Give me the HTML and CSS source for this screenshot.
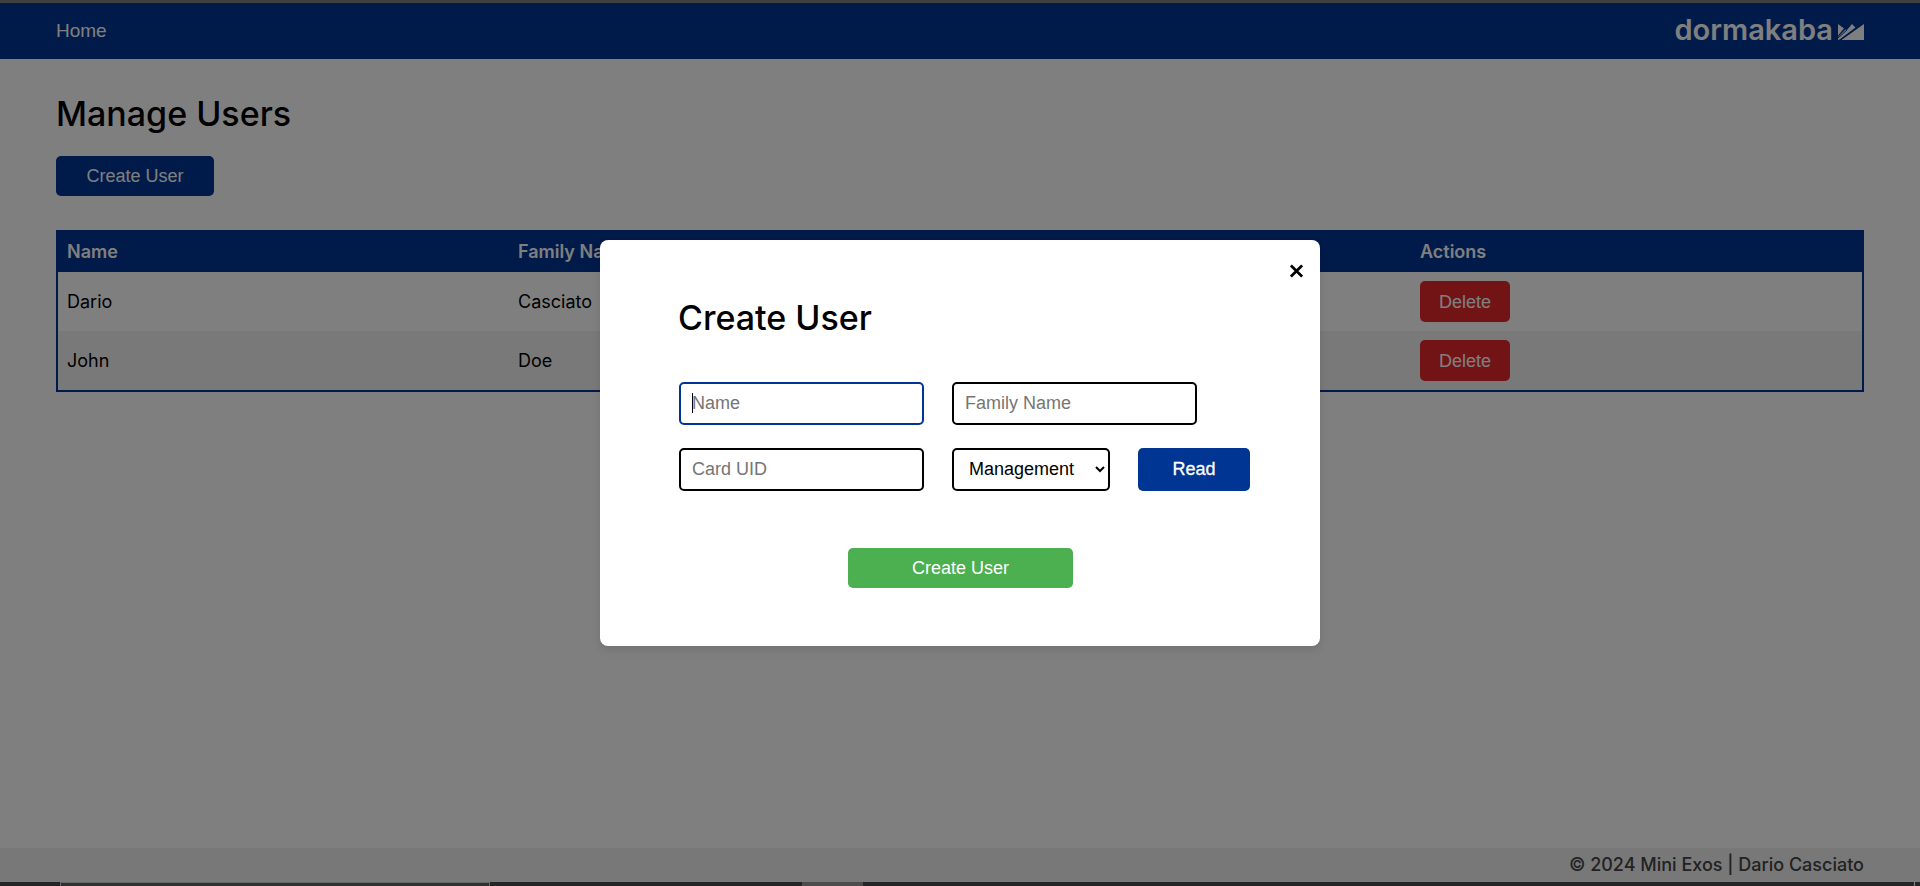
FILE: index.html
```html
<!DOCTYPE html>
<html lang="en">
<head>
<meta charset="utf-8">
<meta name="viewport" content="width=device-width, initial-scale=1">
<title>Manage Users</title>
<link rel="stylesheet" href="styles.css">
</head>
<body>
<div class="edge-top"></div>
<div class="app">
  <header class="topbar">
    <a class="nav-link" href="#">Home</a>
    <div class="logo">
      <span>dormakaba</span>
      <svg class="logo-mark" viewBox="0 0 26 16" aria-hidden="true">
        <path d="M0 0 6 4.500 0 11.500Z M0 13 7.500 5.500 9 6 14 0 17.500 3.500 1.500 15.500 0 16Z M3.500 16 26 0V16Z"/>
        <path class="logo-cut" d="M0 14 9 6"/>
      </svg>
    </div>
  </header>

  <main class="content">
    <h1 class="title">Manage Users</h1>
    <button class="btn btn-primary" type="button">Create User</button>
    <table class="users">
      <thead>
        <tr><th>Name</th><th>Family Name</th><th></th><th>Actions</th></tr>
      </thead>
      <tbody>
        <tr><td>Dario</td><td>Casciato</td><td></td><td><button class="btn btn-delete" type="button">Delete</button></td></tr>
        <tr><td>John</td><td>Doe</td><td></td><td><button class="btn btn-delete" type="button">Delete</button></td></tr>
      </tbody>
    </table>
  </main>

  <footer class="footer">© 2024 Mini Exos | Dario Casciato</footer>

  <div class="overlay">
    <form class="modal" role="dialog" aria-labelledby="modal-title">
      <button class="close" type="button" aria-label="Close">
        <svg viewBox="0 0 14 14" aria-hidden="true"><path d="M1 1 13 13M13 1 1 13"/></svg>
      </button>
      <h2 class="title" id="modal-title">Create User</h2>
      <div class="fields">
        <div class="row">
          <input class="field field-active" type="text" placeholder="Name" aria-label="Name">
          <input class="field" type="text" placeholder="Family Name" aria-label="Family Name">
        </div>
        <div class="row">
          <input class="field" type="text" placeholder="Card UID" aria-label="Card UID">
          <select class="select" aria-label="Role"><option>Management</option></select>
          <button class="btn btn-read" type="button">Read</button>
        </div>
      </div>
      <button class="btn btn-submit" type="submit">Create User</button>
    </form>
  </div>
</div>
<div class="edge-bottom"><span class="task-search"></span><span class="task-active"></span><span class="task-end"></span></div>
</body>
</html>
```

FILE: styles.css
```css
* { box-sizing: border-box; }

body {
  margin: 0;
  min-height: 100vh;
  display: flex;
  flex-direction: column;
  background: #fff;
  color: #000;
  font: 18px/22px Inter, "Open Sans", sans-serif;
}

.edge-top { height: 3px; background: #3f3f3f; }

.app {
  position: relative;
  flex: 1;
  display: flex;
  flex-direction: column;
}

.topbar {
  height: 56px;
  padding: 0 56px;
  display: flex;
  align-items: center;
  justify-content: space-between;
  background: #003594;
  color: #fff;
}

.nav-link {
  color: inherit;
  text-decoration: none;
  font-family: "Liberation Sans", Arial, sans-serif;
  font-size: 19px;
}

.logo {
  display: flex;
  align-items: baseline;
  gap: 5px;
  padding-bottom: 2px;
  font-size: 29px;
  font-weight: 600;
  line-height: 32px;
}

.logo-mark { width: 26px; height: 16px; fill: #fff; }
.logo-cut { stroke: #003594; stroke-width: 1; }

.content { flex: 1; padding: 33px 56px; }

.title {
  margin: 0;
  font-size: 34px;
  font-weight: 500;
  line-height: 44px;
}

.btn {
  height: 40px;
  padding: 0 16px;
  border: 0;
  border-radius: 5px;
  color: #fff;
  font: 18px/22px "Liberation Sans", Arial, sans-serif;
}

.btn-primary { width: 158px; margin-top: 20px; background: #003594; display: block; }
.btn-delete { display: block; height: 41px; width: 90px; background: #e5282c; }

.users {
  width: 100%;
  margin-top: 34px;
  table-layout: fixed;
  border: 2px solid #003594;
  border-spacing: 0;
  text-align: left;
}

.users th { padding: 9px; background: #003594; color: #fff; font-weight: 600; }
.users td { padding: 9px; }
.users tbody tr:nth-child(even) { background: #f2f2f2; }

.footer {
  padding: 6px 56px;
  background: #f0f0f0;
  color: #444;
  text-align: right;
  font-weight: 500;
}

.overlay {
  position: absolute;
  inset: 0;
  display: flex;
  align-items: center;
  justify-content: center;
  background: rgba(0, 0, 0, 0.5);
}

.modal {
  position: relative;
  width: 720px;
  max-width: 100%;
  padding: 56px 70px 58px 78px;
  background: #fff;
  border-radius: 8px;
  box-shadow: 0 4px 8px rgba(0, 0, 0, 0.1);
}

.close {
  position: absolute;
  top: 21px;
  right: 14px;
  padding: 3px;
  border: 0;
  background: none;
  line-height: 0;
}

.close svg { width: 13px; height: 14px; fill: none; stroke: #000; stroke-width: 3; }

.fields {
  display: flex;
  flex-direction: column;
  gap: 23px;
  margin: 42px 0 0 1px;
}

.row { display: flex; align-items: center; gap: 28px; }

.field, .select {
  height: 43px;
  border: 2px solid #000;
  border-radius: 5px;
  background: #fff;
  color: #000;
  font: 18px/22px "Liberation Sans", Arial, sans-serif;
  outline: none;
}

.field { width: 245px; padding: 0 11px; }

/* Focused look: blue border and a text caret at the start of the field */
.field-active {
  border-color: #003594;
  background: linear-gradient(#000, #000) 11px center / 1px 20px no-repeat #fff;
}

.field::placeholder { color: #757575; }
.select { width: 158px; padding: 0 0 0 11px; }

.btn-read { width: 112px; height: 43px; background: #003594; -webkit-text-stroke: 0.3px #fff; }

.btn-submit {
  display: block;
  width: 225px;
  margin: 57px auto 0 170px;
  background: #4caf50;
}

.edge-bottom {
  height: 4px;
  display: flex;
  background: #242526;
}

.task-search { width: 430px; margin-left: 60px; border: 1px solid #666; border-bottom: 0; background: #303232; }
.task-active { width: 61px; margin-left: 312px; background: #4d4d4d; }
.task-end { width: 1px; margin: 0 5px 0 auto; background: #888; }
```
